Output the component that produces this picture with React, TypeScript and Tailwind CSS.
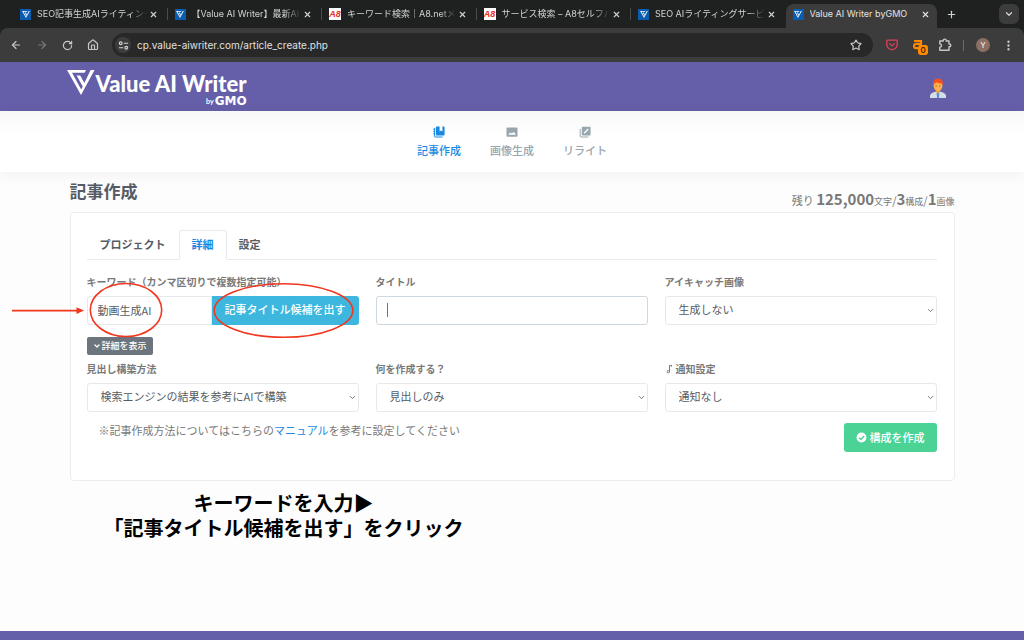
import React from "react";
import {
  ArrowLeft,
  ArrowRight,
  RotateCw,
  House,
  Star,
  X,
  Plus,
  ChevronDown,
  EllipsisVertical,
} from "lucide-react";

function BrandMark({ className }: { className: string }) {
  return (
    <svg viewBox="0 0 28 25" className={className} fill="currentColor" aria-hidden="true">
      <path d="M0 0H19L17.6 2.8H5L14.2 19.4L15.7 16.6L9.6 5.6H13.2L17.4 13L23.6 0H27.6L14 25Z" />
    </svg>
  );
}

function ValueFavicon() {
  return (
    <span className="flex size-[11px] shrink-0 items-center justify-center bg-[#0a5cb0] text-white">
      <BrandMark className="h-[7px] w-[8px]" />
    </span>
  );
}

function A8Favicon() {
  return (
    <span className="flex size-[12px] shrink-0 items-center justify-center overflow-hidden bg-white font-['Liberation_Sans',sans-serif] text-[9px] leading-none font-bold text-[#e8301c] italic">
      A8
    </span>
  );
}

const tabs = [
  { title: "SEO記事生成AIライティング", icon: "value" },
  { title: "【Value AI Writer】最新AIモ", icon: "value" },
  { title: "キーワード検索｜A8.netメデ", icon: "a8" },
  { title: "サービス検索 – A8セルフバッ", icon: "a8" },
  { title: "SEO AIライティングサービス", icon: "value" },
  { title: "Value AI Writer byGMO", icon: "value", active: true },
];

function TabStrip() {
  return (
    <div className="flex h-7 items-center bg-[#1f2121] pr-[5px] pl-[13px] text-[#d2d3d3]">
      <div className="grid h-7 w-full max-w-[927px] grid-cols-6">
        {tabs.map((tab, i) => (
          <div
            key={tab.title}
            className={
              tab.active
                ? "mt-1 mr-[3px] flex min-w-0 items-center rounded-t-lg bg-[#3c3c3c] pr-[7px] pb-1 pl-[7px] text-[#e3e3e3]"
                : "flex min-w-0 items-center pl-[7px]"
            }
          >
            {tab.icon === "value" ? <ValueFavicon /> : <A8Favicon />}
            <span
              className={
                tab.active
                  ? "ml-[6px] min-w-0 flex-1 overflow-hidden text-[9px] leading-4 whitespace-nowrap"
                  : "ml-[6px] min-w-0 flex-1 overflow-hidden mask-r-from-85% text-[9px] leading-4 whitespace-nowrap"
              }
            >
              {tab.title}
            </span>
            <button type="button" aria-label="タブを閉じる" className="ml-[2px]">
              <X size={9} strokeWidth={3} />
            </button>
            {!tab.active && (
              <span
                className={
                  i < 4 ? "ml-[9px] h-3 w-px shrink-0 bg-[#4a4b4b]" : "ml-[9px] h-3 w-px shrink-0"
                }
              />
            )}
          </div>
        ))}
      </div>
      <button type="button" aria-label="新しいタブ" className="ml-[6px]">
        <Plus size={11} strokeWidth={2.5} />
      </button>
      <button
        type="button"
        aria-label="タブを検索"
        className="ml-auto flex size-5 items-center justify-center rounded-md bg-[#3c3c3c]"
      >
        <ChevronDown size={10} strokeWidth={3} />
      </button>
    </div>
  );
}

function Toolbar() {
  return (
    <div className="bg-[#1f2121]">
      <div className="flex h-[34px] items-center rounded-t-lg bg-[#3c3c3c] pr-[9px] pl-[10px] text-[#c7c7c7]">
        <div className="flex items-center gap-[14px]">
          <button type="button" aria-label="戻る">
            <ArrowLeft size={12} strokeWidth={2.4} />
          </button>
          <button type="button" aria-label="進む" className="text-[#777777]">
            <ArrowRight size={12} strokeWidth={2.4} />
          </button>
          <button type="button" aria-label="再読み込み">
            <RotateCw size={11} strokeWidth={2.6} />
          </button>
          <button type="button" aria-label="ホーム">
            <House size={12} strokeWidth={2.4} />
          </button>
        </div>
        <div className="ml-[13px] flex h-6 min-w-0 flex-1 items-center rounded-full bg-[#282828] pr-[11px] pl-[3px]">
          <span className="flex size-4 shrink-0 items-center justify-center rounded-full bg-[#3c3c3c]">
            <svg viewBox="0 0 12 12" className="size-[11px]" fill="none" stroke="#d5d5d5" strokeWidth="1.2">
              <circle cx="3" cy="3.5" r="1.5" />
              <path d="M6.3 3.5H11M1 8.5H5.7" />
              <circle cx="9" cy="8.5" r="1.5" />
            </svg>
          </span>
          <input
            aria-label="アドレス"
            defaultValue="cp.value-aiwriter.com/article_create.php"
            className="ml-[6px] min-w-0 flex-1 bg-transparent text-[10px] leading-4 text-[#e0e0e0] outline-none"
          />
          <button type="button" aria-label="ブックマーク">
            <Star size={12} strokeWidth={2.4} />
          </button>
        </div>
        <div className="ml-[13px] flex items-center">
          <svg viewBox="0 0 12 12" className="size-[12px]" fill="none" stroke="#e0405a" strokeWidth="1.3" aria-hidden="true">
            <path d="M1.6 1.2H10.4Q11.2 1.2 11.2 2V5.6A5.2 5 0 0 1 .8 5.6V2Q.8 1.2 1.6 1.2Z" />
            <path d="M3.6 4.6L6 6.9L8.4 4.6" strokeLinecap="round" strokeLinejoin="round" />
          </svg>
          <span className="relative mt-[3px] ml-[15px] block h-[16px] w-[15px]">
            <svg viewBox="0 0 15 16" className="h-full w-full" fill="none" aria-hidden="true">
              <path d="M1 2H8V8M8 4.8H3Q1 5 1 7Q1 9.2 3 9.2H5" stroke="#ff8a00" strokeWidth="2.2" />
              <rect x="5" y="6" width="10" height="10" rx="2.4" fill="#ff8a00" />
            </svg>
            <span className="absolute right-0 bottom-0 w-[10px] text-center text-[8px] leading-[10px] font-medium text-[#2a1a00]">
              0
            </span>
          </span>
          <svg viewBox="0 0 14 14" className="ml-[10px] size-[14px]" fill="none" stroke="currentColor" strokeWidth="1.4" strokeLinejoin="round" aria-hidden="true">
            <path d="M1.8 3H5.2V2.6A1.5 1.5 0 0 1 8.2 2.6V3H11V6H11.4A1.4 1.4 0 0 1 11.4 8.8H11V12.3H1.8V9.3A1.7 1.7 0 0 0 1.8 5.9Z" />
          </svg>
          <span className="ml-[11px] h-[11px] w-px bg-[#6a6a6a]" />
          <span className="ml-[12px] flex size-[14px] items-center justify-center rounded-full bg-[#8d6e63] text-[8px] leading-none text-white">
            Y
          </span>
          <button type="button" aria-label="メニュー" className="ml-[12px]">
            <EllipsisVertical size={13} strokeWidth={2.4} />
          </button>
        </div>
      </div>
    </div>
  );
}

function Avatar() {
  return (
    <svg viewBox="0 0 16 20" className="h-5 w-4" aria-hidden="true">
      <path d="M0 20V17.4Q.3 15.2 3 14.4L6 13.4H10L13 14.4Q15.7 15.2 16 17.4V20Z" fill="#d5dde6" />
      <path d="M6.6 14.5H9.4L9 20H7Z" fill="#5a8fd0" />
      <path d="M6 11H10V14L8 15.4L6 14Z" fill="#f19a35" />
      <ellipse cx="8" cy="7.8" rx="4.4" ry="5.2" fill="#ffb04c" />
      <path d="M3 7.2Q2.4 .4 8 .4Q13.6 .4 13 7.2L12 5.6Q8.6 5.6 6.6 4.2Q5.6 5.4 4 5.8Z" fill="#f4511e" />
      <path d="M5.4 8H7M9 8H10.6" stroke="#8a5a20" strokeWidth=".7" />
    </svg>
  );
}

function Header() {
  return (
    <header className="bg-[#655fa9]">
      <div className="mx-auto flex h-[49px] w-full max-w-[885px] items-center justify-between pt-[2px] pr-[9px]">
        <a href="#top" className="-ml-[3px] flex items-start gap-px text-white">
          <BrandMark className="h-[25px] w-[28px]" />
          <span className="flex flex-col items-end">
            <span className="font-['Lato',sans-serif] text-[22px] leading-[27px] font-black">
              Value AI Writer
            </span>
            <span className="flex items-end gap-px">
              <span className="font-['Lato',sans-serif] text-[7px] leading-[8px] font-bold">by</span>
              <span className="font-['DejaVu_Sans',sans-serif] text-[12px] leading-[8px] font-bold">GMO</span>
            </span>
          </span>
        </a>
        <Avatar />
      </div>
    </header>
  );
}

function ArticleIcon() {
  return (
    <svg viewBox="0 0 12 12" className="size-[12px]" fill="currentColor" aria-hidden="true">
      <path d="M3.8 0.6H6.6V5.4L8 4.4L9.4 5.4V0.6H10.6Q11.6 .6 11.6 1.6V8.6Q11.6 9.6 10.6 9.6H3.8Q2.8 9.6 2.8 8.6V1.6Q2.8 .6 3.8 .6Z" />
      <path d="M1.4 2V10.2Q1.4 11 2.2 11H9.6" fill="none" stroke="currentColor" strokeWidth="1" />
      <path d="M.2 3.4H2M.2 5.6H2M.2 7.8H2" fill="none" stroke="currentColor" strokeWidth=".8" />
    </svg>
  );
}

function ImageIcon() {
  return (
    <svg viewBox="0 0 12 12" className="size-[12px]" aria-hidden="true">
      <rect x=".5" y="1.5" width="11" height="9.2" rx="1" fill="currentColor" />
      <path d="M2.6 8.8V8L4.4 6.4L5.6 7.5L7.6 6L9.6 8V8.8Z" fill="#fff" />
    </svg>
  );
}

function RewriteIcon() {
  return (
    <svg viewBox="0 0 12 12" className="size-[12px]" aria-hidden="true">
      <rect x="2.8" y=".8" width="8.8" height="8.6" rx="1" fill="currentColor" />
      <path d="M1.2 3V10.2Q1.2 11 2 11H9.4" fill="none" stroke="currentColor" strokeWidth="1" />
      <path d="M5.2 7.2L9.2 3" stroke="#fff" strokeWidth="1.3" />
    </svg>
  );
}

function MainNav() {
  return (
    <nav className="flex h-[61px] justify-center gap-[29px] bg-linear-to-b from-[#f8f8f8] to-white to-40% pt-[15px] text-[11px] leading-4 font-medium text-[#98a6ad] shadow-[0_2px_14px_rgba(0,0,0,0.06)]">
      <a href="#article" className="flex w-11 flex-col items-center gap-1 text-[#188ae2]">
        <ArticleIcon />
        <span className="whitespace-nowrap">記事作成</span>
      </a>
      <a href="#image" className="flex w-11 flex-col items-center gap-1">
        <ImageIcon />
        <span className="whitespace-nowrap">画像生成</span>
      </a>
      <a href="#rewrite" className="flex w-11 flex-col items-center gap-1">
        <RewriteIcon />
        <span className="whitespace-nowrap">リライト</span>
      </a>
    </nav>
  );
}

const labelClass = "mb-[6px] block text-[10px] leading-4 font-bold whitespace-nowrap text-[#797979]";

function SelectField({ id, label, value }: { id: string; label: React.ReactNode; value: string }) {
  return (
    <div className="min-w-0">
      <label htmlFor={id} className={labelClass}>
        {label}
      </label>
      <div className="relative">
        <select
          id={id}
          className="block h-[29px] w-full appearance-none rounded-[3px] border border-[#e6e9ec] bg-white pr-5 pb-[2px] pl-[13px] text-[11px] text-[#565c62]"
        >
          <option>{value}</option>
        </select>
        <ChevronDown
          size={9}
          strokeWidth={2.6}
          className="pointer-events-none absolute top-[10px] right-[2px] text-[#6c757d]"
        />
      </div>
    </div>
  );
}

function Annotations() {
  return (
    <svg
      viewBox="0 0 348 60"
      className="pointer-events-none absolute -top-[15px] -left-[77px] h-[60px] w-[348px] max-w-none"
      fill="none"
      stroke="#f2371f"
      strokeWidth="1.6"
      aria-hidden="true"
    >
      <path d="M2 29.6H68" />
      <path d="M66.5 26.2L74 29.6L66.5 33Z" fill="#f2371f" stroke="none" />
      <ellipse cx="116" cy="29" rx="35.7" ry="26.5" />
      <ellipse cx="273.5" cy="29.5" rx="69.3" ry="26.8" />
    </svg>
  );
}

function ArticleForm() {
  return (
    <form
      className="rounded-[4px] border border-[#ebeeef] bg-white pt-[17px] pr-[17px] pb-7 pl-4"
      onSubmit={(e) => e.preventDefault()}
    >
      <div role="tablist" className="flex h-[30px] border-b border-[#e8ebed] text-[11px] leading-4 font-bold text-[#565c66]">
        <button type="button" role="tab" className="px-[13px] pb-[2px] whitespace-nowrap">
          プロジェクト
        </button>
        <button
          type="button"
          role="tab"
          aria-selected="true"
          className="h-[30px] rounded-t-[3px] border border-[#e8ebed] border-b-white bg-white px-3 pb-[2px] text-[#188ae2]"
        >
          詳細
        </button>
        <button type="button" role="tab" className="px-3 pb-[2px]">
          設定
        </button>
      </div>

      <div className="mt-[14px] grid grid-cols-3 gap-x-[17px]">
        <div className="min-w-0">
          <label htmlFor="keyword" className={labelClass}>
            キーワード（カンマ区切りで複数指定可能）
          </label>
          <div className="relative flex">
            <input
              id="keyword"
              defaultValue="動画生成AI"
              className="h-[29px] min-w-0 flex-1 rounded-l-[3px] border border-[#e6e9ec] px-[10px] pb-[2px] text-[11px] text-[#565c62] outline-none"
            />
            <button
              type="button"
              className="h-[29px] w-[147px] shrink-0 rounded-r-[3px] bg-[#3eb7de] pb-[2px] text-[11px] font-medium whitespace-nowrap text-white"
            >
              記事タイトル候補を出す
            </button>
            <Annotations />
          </div>
          <button
            type="button"
            className="mt-3 flex h-[18px] items-center gap-px rounded-[2px] bg-[#6c757d] px-[6px] pb-px text-[9px] leading-4 font-medium text-white"
          >
            <ChevronDown size={8} strokeWidth={4} />
            詳細を表示
          </button>
        </div>
        <div className="min-w-0">
          <label htmlFor="title" className={labelClass}>
            タイトル
          </label>
          <div className="relative">
            <input
              id="title"
              className="block h-[29px] w-full rounded-[3px] border border-[#cfd8df] px-[10px] text-[11px] text-[#565c62] outline-none"
            />
            <span className="pointer-events-none absolute top-[7px] left-[11px] h-[14px] w-px bg-[#6f757a]" />
          </div>
        </div>
        <SelectField id="eyecatch" label="アイキャッチ画像" value="生成しない" />
      </div>

      <div className="mt-[6px] grid grid-cols-3 gap-x-[17px]">
        <SelectField id="method" label="見出し構築方法" value="検索エンジンの結果を参考にAIで構築" />
        <SelectField id="target" label="何を作成する？" value="見出しのみ" />
        <SelectField
          id="notice"
          label={
            <span className="flex items-center gap-[3px]">
              <svg viewBox="0 0 8 10" className="h-[10px] w-[8px]" fill="none" stroke="currentColor" strokeWidth="1" aria-hidden="true">
                <circle cx="3.3" cy="7.7" r="1.2" />
                <path d="M4.5 7.8V1.4H6.6V2.8" />
              </svg>
              通知設定
            </span>
          }
          value="通知なし"
        />
      </div>

      <div className="mt-[11px] flex items-start justify-between">
        <p className="pl-3 text-[11px] leading-[14px] text-[#797979]">
          ※記事作成方法についてはこちらの
          <a href="#manual" className="text-[#188ae2]">
            マニュアル
          </a>
          を参考に設定してください
        </p>
        <button
          type="submit"
          className="flex h-[29px] items-center gap-[3px] rounded-[3px] bg-[#4bd396] px-3 text-[11px] leading-4 font-medium whitespace-nowrap text-white"
        >
          <svg viewBox="0 0 12 12" className="size-[11px]" aria-hidden="true">
            <circle cx="6" cy="6" r="5.4" fill="#fff" />
            <path d="M3.3 6.2L5.3 8.1L8.8 4.4" fill="none" stroke="#4bd396" strokeWidth="1.6" />
          </svg>
          <span className="pb-px">構成を作成</span>
        </button>
      </div>
    </form>
  );
}

export default function App() {
  return (
    <div className="flex min-h-screen flex-col bg-[#fdfdfd] font-['Noto_Sans_CJK_JP',sans-serif]">
      <div className="font-['Inter','Noto_Sans_CJK_JP',sans-serif]">
        <TabStrip />
        <Toolbar />
      </div>
      <Header />
      <MainNav />
      <main className="mx-auto w-full max-w-[885px]">
        <div className="flex h-10 items-end justify-between">
          <h1 className="self-start pt-[7px] text-[17px] leading-6 font-bold text-[#565c66]">記事作成</h1>
          <p className="text-[11px] leading-5 whitespace-nowrap text-[#797979]">
            残り <b className="text-[15px]">125,000</b>
            <span className="text-[9px]">文字</span>/<b className="text-[15px]">3</b>
            <span className="text-[9px]">構成</span>/<b className="text-[15px]">1</b>
            <span className="text-[9px]">画像</span>
          </p>
        </div>
        <ArticleForm />
        <p className="mt-[9px] ml-8 w-[364px] text-center text-[20px] leading-[25px] font-bold whitespace-nowrap text-black">
          キーワードを入力▶
          <br />
          「記事タイトル候補を出す」をクリック
        </p>
      </main>
      <footer className="mt-auto h-[9px] bg-[#655fa9]" />
    </div>
  );
}
